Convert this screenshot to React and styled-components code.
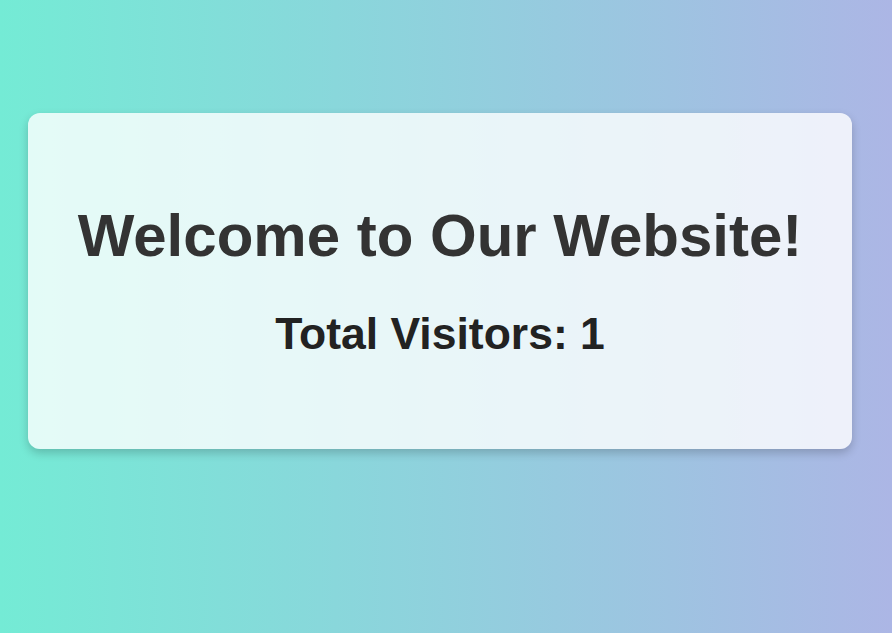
import React from "react";
import styled, { createGlobalStyle } from "styled-components";

const Global = createGlobalStyle`
  html, body { margin: 0; padding: 0; }
  body {
    min-height: 633px;
    background: linear-gradient(to right, #74ebd5, #acb6e5);
    font-family: "Liberation Sans", Arial, sans-serif;
  }
`;

const Page = styled.div`
  padding: 113px 40px 0 28px;
  display: flex;
  justify-content: center;
`;

const Card = styled.div`
  width: 824px;
  height: 336px;
  box-sizing: border-box;
  padding-bottom: 2px;
  background: rgba(255, 255, 255, 0.8);
  border-radius: 12px;
  box-shadow: 0 4px 10px rgba(0, 0, 0, 0.2);
  display: flex;
  flex-direction: column;
  align-items: center;
  justify-content: center;
  text-align: center;
`;

const Title = styled.h1`
  margin: 0;
  font-size: 60px;
  font-weight: bold;
  color: #333;
`;

const Counter = styled.h2`
  margin: 39px 0 0;
  font-size: 44.5px;
  font-weight: bold;
  color: #222;
`;

export default function App() {
  return (
    <>
      <Global />
      <Page>
        <Card>
          <Title>Welcome to Our Website!</Title>
          <Counter>Total Visitors: 1</Counter>
        </Card>
      </Page>
    </>
  );
}
